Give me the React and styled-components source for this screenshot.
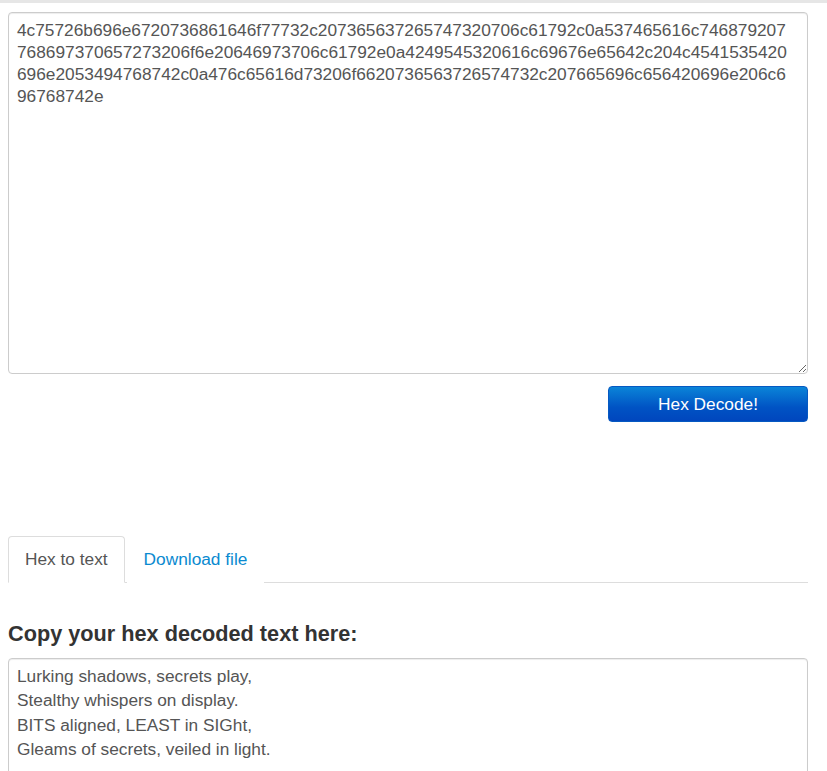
import React from 'react';
import styled, { createGlobalStyle } from 'styled-components';

const GlobalStyle = createGlobalStyle`
  body {
    margin: 0;
    background: #fff;
    font-family: "Liberation Sans", Arial, sans-serif;
  }
`;

const TopRule = styled.div`
  height: 3px;
  background: #e6e6e6;
`;

const Page = styled.div`
  width: 800px;
  padding: 9px 0 0 8px;
`;

const TextBox = styled.textarea`
  display: block;
  box-sizing: border-box;
  width: 800px;
  height: ${({ $height }) => $height}px;
  margin: 0;
  padding: ${({ $pad }) => $pad};
  border: 1px solid #ccc;
  border-radius: 4px;
  box-shadow: inset 0 1px 1px rgba(0, 0, 0, 0.075);
  font-family: "Liberation Sans", Arial, sans-serif;
  font-size: 17.3px;
  line-height: ${({ $lh }) => $lh}px;
  color: #555;
  resize: ${({ $resize }) => $resize};
  outline: none;
  overflow: hidden;
  word-break: break-all;
`;

const ButtonRow = styled.div`
  display: flex;
  justify-content: flex-end;
  margin-top: 12px;
`;

const DecodeButton = styled.button`
  width: 200px;
  height: 36px;
  border: 1px solid #0659c2;
  border-radius: 4px;
  background: linear-gradient(to bottom, #0a84d8 0%, #0053c4 60%, #0046bd 100%);
  color: #fff;
  font-family: "Liberation Sans", Arial, sans-serif;
  font-size: 17.3px;
  cursor: pointer;
`;

const Tabs = styled.ul`
  display: flex;
  list-style: none;
  margin: 114px 0 0;
  padding: 0;
  border-bottom: 1px solid #ddd;
`;

const Tab = styled.li`
  margin-bottom: -1px;
  margin-right: 2px;
  padding: 12px 16px;
  font-size: 17.3px;
  line-height: 21px;
  border: 1px solid ${({ $active }) => ($active ? '#ddd' : 'transparent')};
  border-bottom-color: ${({ $active }) => ($active ? '#fff' : 'transparent')};
  border-radius: 4px 4px 0 0;
  background: #fff;
  color: ${({ $active }) => ($active ? '#555' : '#0a8ad0')};
  cursor: pointer;
`;

const Heading = styled.h3`
  margin: 40px 0 13px;
  font-size: 21.7px;
  line-height: 22px;
  font-weight: bold;
  color: #333;
`;

const hex =
  '4c75726b696e6720736861646f77732c20736563726574732070' +
  '6c61792c0a537465616c746879207768697370657273206f6e20646973706c61792e0a' +
  '4249545320616c69676e65642c204c4541535420696e2053494768742c0a' +
  '476c65616d73206f6620736563726574732c207665696c656420696e206c696768742e';

const poem =
  'Lurking shadows, secrets play,\nStealthy whispers on display.\nBITS aligned, LEAST in SIGht,\nGleams of secrets, veiled in light.';

const App = () => (
  <>
    <GlobalStyle />
    <TopRule />
    <Page>
      <TextBox $height={362} $pad="6px 18px 6px 8px" $lh={22} $resize="vertical" defaultValue={hex} spellCheck={false} />
      <ButtonRow>
        <DecodeButton>Hex Decode!</DecodeButton>
      </ButtonRow>
      <Tabs>
        <Tab $active>Hex to text</Tab>
        <Tab>Download file</Tab>
      </Tabs>
      <Heading>Copy your hex decoded text here:</Heading>
      <TextBox $height={200} $pad="5px 8px" $lh={24.3} $resize="none" defaultValue={poem} spellCheck={false} />
    </Page>
  </>
);

export default App;
